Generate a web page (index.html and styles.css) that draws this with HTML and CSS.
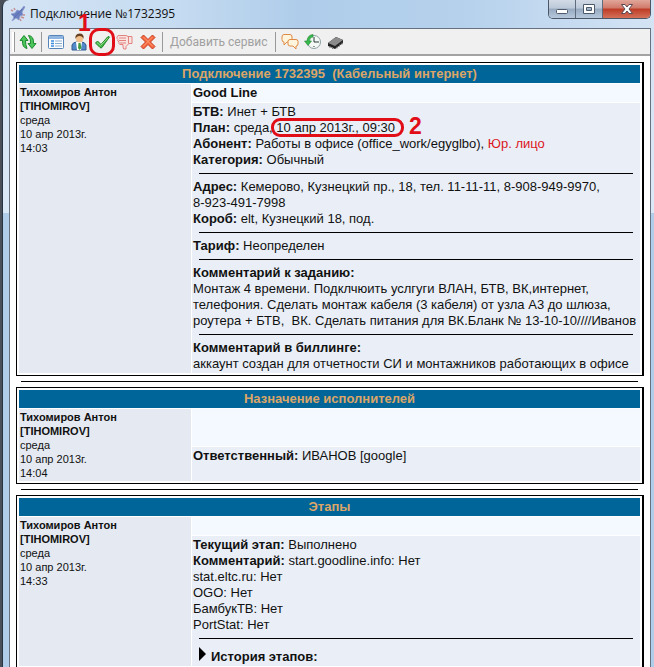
FILE: index.html
```
<!DOCTYPE html>
<html lang="ru">
<head>
	<meta charset="utf-8">
	<title>Подключение №1732395</title>
	<link rel="stylesheet" href="styles.css">
</head>
<body>
<div class="window">
	<header class="titlebar">
		<svg class="app-icon" width="18" height="18" viewBox="0 0 18 18">
			<path d="M3 16l2-4-3-3 4-1 2-3 3 1 4-5 1 1-3 5 1 3-3 1-1 4-3-2z" fill="#6b7fc0" stroke="#8f9dcb" stroke-width=".8"/>
			<path d="M2 5l2 1M5 3l1 2M12 12l3 1M11 14l1 2M14 10l2 0" stroke="#c58f93" stroke-width="1.500"/>
			<path d="M5 13L13 4" stroke="#5870b4"/>
		</svg>
		<h1>Подключение №1732395</h1>
		<div class="controls">
			<button class="control" aria-label="Свернуть">
				<svg width="14" height="12" viewBox="0 0 14 12"><rect x="1.5" y="6.5" width="11" height="4" rx="1" fill="#fff" stroke="#4d5a6c"/></svg>
			</button>
			<button class="control" aria-label="Развернуть">
				<svg width="14" height="12" viewBox="0 0 14 12"><path d="M1.500 1.500h11v9h-11zM4.500 4.500v3h5v-3z" fill="#fff" fill-rule="evenodd" stroke="#4d5a6c"/></svg>
			</button>
			<button class="control close" aria-label="Закрыть">
				<svg width="14" height="12" viewBox="0 0 14 12"><path d="M1.500 1.500h3.500l2 2.500 2-2.500h3.500l-3.500 4.500 3.500 4.500h-3.500l-2-2.500-2 2.500H1.500l3.500-4.500z" fill="#fff" stroke="#5b4a55"/></svg>
			</button>
		</div>
	</header>
	<div class="client">
		<nav class="toolbar">
			<span class="grip"></span>
			<button class="tool refresh" aria-label="Обновить">
				<svg width="18" height="18" viewBox="0 0 18 18">
					<path d="M8 15.500Q3 14.500 3.500 7.500H1L5 2.500 9 7.500H6.500Q6.500 12 8 15.500z" fill="#4cc55a" stroke="#1d8a2e"/>
					<path d="M9.500 2.500Q15 3 14.500 10.500H17L13 15.500 9 10.500h2.500Q12 6 9.500 2.500z" fill="#4cc55a" stroke="#1d8a2e"/>
				</svg>
			</button>
			<span class="separator"></span>
			<button class="tool" aria-label="Форма">
				<svg width="18" height="18" viewBox="0 0 18 18">
					<rect x="1.500" y="2.500" width="15" height="13" rx="1" fill="#fff" stroke="#5684b8"/>
					<path d="M2 3h14v3H2z" fill="#8fb6e0"/>
					<path d="M4 8h3M4 10.500h3M4 13h3" stroke="#3c8ade" stroke-width="1.500"/>
					<path d="M8 8h7M8 10.500h7M8 13h7" stroke="#8aabd0"/>
				</svg>
			</button>
			<button class="tool" aria-label="Исполнители">
				<svg width="18" height="18" viewBox="0 0 18 18">
					<path d="M2 17v-5q1-3 5-3h4q4 0 5 3v5z" fill="#5489c9" stroke="#315b91"/>
					<path d="M6 9h6l-1 8H7z" fill="#fff"/>
					<path d="M8.500 10h2l1 5-2 2-1.500-2z" fill="#409a43"/>
					<ellipse cx="9.500" cy="5.500" rx="3.500" ry="4" fill="#f1c08d"/>
					<path d="M5.500 6q-1-5 4-5.500 5 0 4 5.500-1-3-4-3t-4 3z" fill="#68401f"/>
				</svg>
			</button>
			<button class="tool marked" aria-label="Выполнить">
				<svg width="18" height="18" viewBox="0 0 18 18"><path d="M2.500 10l2-2L8 11.500l6.500-7.500q2-1 2 0L9 14.500q-1 1-2 0z" fill="#45b649" stroke="#26882c"/><path d="M4 9.500l3.500 3L15 5" fill="none" stroke="#89da81"/></svg>
				<span class="mark-number one">1</span>
			</button>
			<button class="tool" aria-label="Отклонить">
				<svg width="18" height="18" viewBox="0 0 18 18">
					<path d="M2 2.500h8l2 1h4v7h-3l-3 3v2.500q-3 1-3-2v-2.500H4q-2-1-1-2.500-2-1-1-2.500-1.500-1-1-2.500z" fill="#fae4e0" stroke="#e18280"/>
					<path d="M3 5h7M3 7.500h7M4 10h6M12.500 3.500v7" fill="none" stroke="#e18280"/>
				</svg>
			</button>
			<button class="tool" aria-label="Удалить">
				<svg width="18" height="18" viewBox="0 0 18 18"><path d="M2 4.500L4.500 2 9 6.500 13.500 2 16 4.500 11.500 9l4.500 4.500-2.500 2.500L9 11.500 4.500 16 2 13.500 6.500 9z" fill="#f4683e" stroke="#cc3a20"/><path d="M4.500 4L14 13.500M13.500 4L4 13.500" stroke="#ff9c72"/></svg>
			</button>
			<span class="separator"></span>
			<button class="add-service" disabled>Добавить сервис</button>
			<span class="separator"></span>
			<button class="tool" aria-label="Комментарии">
				<svg width="18" height="18" viewBox="0 0 18 18">
					<path d="M3 1.500h6q2 0 2 2.500v3q0 2-2 2H6l-3 3V9Q1 9 1 6.500V4q0-2.500 2-2.500z" fill="#fff5dc" stroke="#df8a45"/>
					<path d="M9 6.500h6q2 0 2 2V11q0 2-2 2v3l-3-3H9q-2 0-2-2V8.500q0-2 2-2z" fill="#fff5dc" stroke="#df8a45"/>
				</svg>
			</button>
			<button class="tool" aria-label="История">
				<svg width="18" height="18" viewBox="0 0 18 18">
					<circle cx="10" cy="9" r="6.500" fill="#f5f9f6" stroke="#8ba0a0"/>
					<path d="M10 4v5h5M10 13v1" fill="none" stroke="#26383a"/>
					<path d="M9 1.500Q3.500 2 3 8H.5L4 12.500 7.500 8H5.500q0-4 3.500-4z" fill="#37ba4c" stroke="#278338" stroke-width=".6"/>
				</svg>
			</button>
			<button class="tool" aria-label="Оборудование">
				<svg width="18" height="18" viewBox="0 0 18 18">
					<path d="M1 10l8-6 7 3v3l-8 6-7-3z" fill="#222"/>
					<path d="M1 10l8-6 7 3-8 6z" fill="#8b8b8b"/>
					<path d="M3 13v2M5.500 14v2M10 13.500v2M12.500 11.500v2M15 9.500v2" stroke="#777"/>
				</svg>
			</button>
		</nav>
		<main class="content">
			<table class="panel">
				<colgroup><col class="author-col"><col></colgroup>
				<thead><tr><th colspan="2">Подключение 1732395&nbsp; (Кабельный интернет)</th></tr></thead>
				<tbody>
				<tr class="subject">
					<td class="author" rowspan="2"><b>Тихомиров Антон<br>[TIHOMIROV]</b><br>среда<br>10 апр 2013г.<br>14:03</td>
					<td><b>Good Line</b></td>
				</tr>
				<tr>
					<td class="details">
						<b>БТВ:</b> Инет + БТВ<br>
						<b>План:</b> среда, <span class="marked-date">10 апр 2013г., 09:30<span class="mark-number two">2</span></span><br>
						<b>Абонент:</b> Работы в офисе (office_work/egyglbo), <span class="legal">Юр. лицо</span><br>
						<b>Категория:</b> Обычный
						<hr>
						<b>Адрес:</b> Кемерово, Кузнецкий пр., 18, тел. 11-11-11, 8-908-949-9970,<br>8-923-491-7998<br>
						<b>Короб:</b> elt, Кузнецкий 18, под.
						<hr>
						<b>Тариф:</b> Неопределен
						<hr>
						<b>Комментарий к заданию:</b><br>
						Монтаж 4 времени. Подклчюить услгуги ВЛАН, БТВ, ВК,интернет,<br>
						телефония. Сделать монтаж кабеля (3 кабеля) от узла А3 до шлюза,<br>
						роутера + БТВ,&nbsp; ВК. Сделать питания для ВК.Бланк № 13-10-10////Иванов
						<hr>
						<b>Комментарий в биллинге:</b><br>
						аккаунт создан для отчетности СИ и монтажников работающих в офисе
					</td>
				</tr>
				</tbody>
			</table>
			<hr class="divider">
			<table class="panel assign">
				<colgroup><col class="author-col"><col></colgroup>
				<thead><tr><th colspan="2">Назначение исполнителей</th></tr></thead>
				<tbody>
				<tr class="subject">
					<td class="author" rowspan="2"><b>Тихомиров Антон<br>[TIHOMIROV]</b><br>среда<br>10 апр 2013г.<br>14:04</td>
					<td></td>
				</tr>
				<tr>
					<td class="details"><b>Ответственный:</b> ИВАНОВ [google]</td>
				</tr>
				</tbody>
			</table>
			<hr class="divider">
			<table class="panel">
				<colgroup><col class="author-col"><col></colgroup>
				<thead><tr><th colspan="2">Этапы</th></tr></thead>
				<tbody>
				<tr class="subject">
					<td class="author" rowspan="2"><b>Тихомиров Антон<br>[TIHOMIROV]</b><br>среда<br>10 апр 2013г.<br>14:33</td>
					<td></td>
				</tr>
				<tr>
					<td class="details">
						<b>Текущий этап:</b> Выполнено<br>
						<b>Комментарий:</b> start.goodline.info: Нет<br>
						stat.eltc.ru: Нет<br>
						OGO: Нет<br>
						БамбукТВ: Нет<br>
						PortStat: Нет
						<hr>
						<button class="history"><svg width="7" height="14" viewBox="0 0 7 14"><path d="M0 0l7 7-7 7z"/></svg><span>История этапов:</span></button>
					</td>
				</tr>
				</tbody>
			</table>
		</main>
	</div>
</div>
</body>
</html>
```
FILE: styles.css
```
* { box-sizing: border-box; }

body {
	margin: 0;
	height: 100vh;
	overflow: hidden;
	background: #4b5058;
	color: #111;
	font: 13px/16px "Liberation Sans", Arial, sans-serif;
}

button { font: inherit; color: inherit; padding: 0; border: 0; background: none; }
svg { display: block; }

.window {
	height: 100%;
	display: flex;
	flex-direction: column;
	margin-left: 2px;
	padding: 0 3px 0 6px;
	border-left: 1px solid #263443;
	border-radius: 7px 0 0 0;
	overflow: hidden;
	background: linear-gradient(#d3e3f4, #dbe8f5 32%, #b0cde9 32%);
}

.titlebar {
	display: flex;
	align-items: center;
	gap: 3px;
	height: 28px;
	flex: none;
	background: linear-gradient(90deg, #d3e3f4, #c6dcf1 25%, #afcdea 45%, #b5d1ec 70%, #d3e3f4);
}
.titlebar h1 { flex: 1; margin: 0; font: 12px/16px "Open Sans", sans-serif; color: #111; }

.controls {
	align-self: flex-start;
	display: flex;
	border: 1px solid #4c5666;
	border-top: 0;
	border-radius: 0 0 5px 5px;
	overflow: hidden;
}
.control {
	width: 27px;
	height: 18px;
	display: grid;
	place-items: center;
	border-right: 1px solid #5f6c7e;
	background: linear-gradient(#d2dbe6, #bcc9d8 45%, #98aabf 50%, #b5c8dc);
}
.control.close { width: 47px; border: 0; background: linear-gradient(#e0a79a, #d0786a 45%, #bd3b25 50%, #d4715a); }

.client {
	flex: 1;
	min-height: 0;
	border: 1px solid #67717f;
	border-bottom: 0;
	background: #fff;
}

.toolbar {
	display: flex;
	align-items: center;
	gap: 5px;
	height: 27px;
	padding: 0 2px;
	border-bottom: 2px solid #a3a3a3;
	background: #f0f0f0;
}
.tool { position: relative; }
.refresh { margin: 0 -1px; }
.grip, .separator { width: 1px; height: 20px; background: #999; }
.grip { width: 3px; background: #fff; border-right: 1px solid #999; }
.add-service { margin: 0 2px; color: #a0a0a0; font: 12px/16px Roboto, sans-serif; }

.marked::before {
	content: "";
	position: absolute;
	inset: -5px -4px;
	border: 3px solid #e10d17;
	border-radius: 10px;
}
.mark-number { position: absolute; color: #e10d17; font-weight: bold; font-size: 23px; line-height: 16px; }
.one { left: -15px; top: -18px; }
.two { left: 100%; top: -2px; margin-left: 14px; }

.content { padding: 6px 6px 0; }

.panel {
	width: 100%;
	table-layout: fixed;
	border: 1px solid #000;
	border-right-width: 2px;
	border-spacing: 1px;
	padding: 1px;
}
.author-col { width: 172px; }
.panel th { height: 18px; padding: 0; background: #069; color: #dca568; }
.panel td { padding: 1px; vertical-align: top; background: #eaeff7; }
.panel td.author { background: #e5eaf2; font-size: 11px; line-height: 14px; }
.panel .subject td:last-child { height: 18px; background: #f3f9ff; }

.details { white-space: nowrap; }
.details hr { height: 1px; margin: 5px 6px; border: 0; background: #000; }
.legal { color: #dc1622; }
.marked-date { position: relative; }
.marked-date::before {
	content: "";
	position: absolute;
	inset: -2px -9px -2px -5px;
	border: 3px solid #e10d17;
	border-radius: 9px;
}

.divider { height: 1px; margin: 5px 6px 5px 5px; border: 0; background: #000; }

.assign .subject td:last-child { height: 36px; }
.assign .details { height: 34px; }

.history { display: flex; gap: 5px; margin-top: 8px; padding-left: 6px; font-weight: bold; }
.history span { padding-top: 2px; }
```
